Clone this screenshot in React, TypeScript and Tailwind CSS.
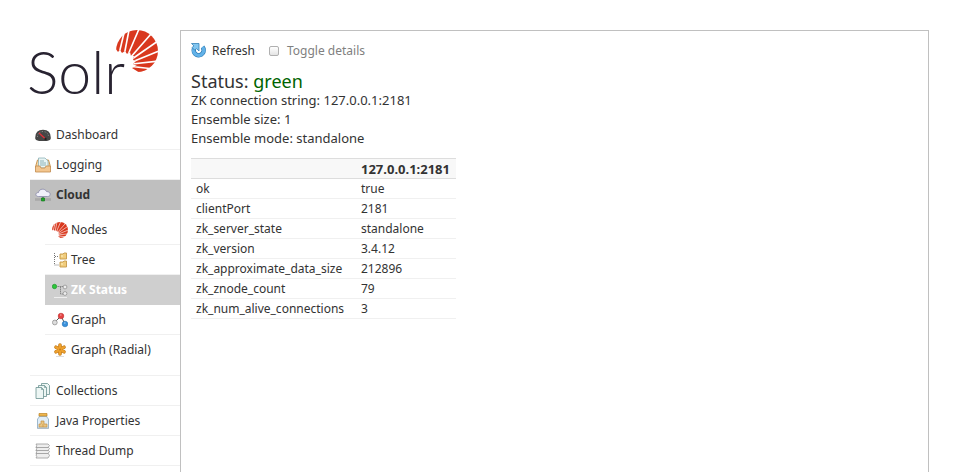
import React, { useId, useState } from "react";

function Burst({ className }: { className?: string }) {
  const id = useId();
  return (
    <svg viewBox="0 0 42 42" className={className} aria-hidden="true">
      <clipPath id={id}>
        <path d="M-1 18 2 22 4 20 6 23 9 21 11 24 14 22 15 26 18 26 17 30 20 31 17 34 21 36 16 38 24 43 43 43 43-1-1-1Z" />
      </clipPath>
      <g clipPath={`url(#${id})`}>
        <circle cx="21" cy="21" r="21" fill="#d9381e" />
        <g stroke="#fff" strokeWidth="1.600">
          <path d="M3 24 8 3" />
          <path d="M8 26 13 0" />
          <path d="M11 27 23-1" />
          <path d="M14 28 35 4" />
          <path d="M16 29 42 11" />
          <path d="M16 32 43 21" />
          <path d="M16 34 43 31" />
          <path d="M16 36.500 38 39" />
        </g>
      </g>
    </svg>
  );
}

function DashboardIcon() {
  return (
    <svg viewBox="0 0 16 16" className="size-4">
      <path d="M.3 12Q-.5 3 8 2.800 16.500 3 15.700 12 14 14.500 8 14 2 14.500.3 12Z" fill="#454545" />
      <path d="M2.500 10Q2.500 5 8 4.500 13.500 5 13.500 10" fill="none" stroke="#999" strokeDasharray="1 1.500" />
      <path d="m4 6 6.500 6" stroke="#e03038" strokeWidth="1.300" />
      <circle cx="10.500" cy="12" r="1.200" fill="#222" />
    </svg>
  );
}

function LoggingIcon() {
  return (
    <svg viewBox="0 0 16 16" className="size-4">
      <path d="M1 8 2.500 3h11L15 8v3H1Z" fill="#f6d8a8" stroke="#c99552" />
      <path d="M3.500 1H10l3 3v7h-9.500Z" fill="#e9f5f5" stroke="#8eb3b8" strokeWidth=".8" />
      <path d="M5 4h4M5 6h6M5 8h6" stroke="#8eb3b8" />
      <path d="M.5 9H5l1 2h4l1-2h4.500v6H.5Z" fill="#f3c68f" stroke="#c08a4c" strokeWidth=".8" />
    </svg>
  );
}

function CloudIcon() {
  return (
    <svg viewBox="0 0 16 16" className="size-4">
      <path d="M3.500 9.500C0 9.500 0 5.500 3.500 5.500 4 1.500 10 1 11.500 4.500c4.500 0 5 5 1 5Z" fill="#f1f1fa" stroke="#8989aa" strokeWidth=".8" />
      <path d="M0 12.500h16M8 10v3" stroke="#777" strokeWidth="1.500" />
      <path d="M0 12.500h16" stroke="#ddd" strokeWidth=".5" />
      <path d="M6.500 11h3v3h-3Z" fill="#20a52b" stroke="#087512" strokeWidth=".6" />
    </svg>
  );
}

function TreeIcon() {
  return (
    <svg viewBox="0 0 16 16" className="size-4">
      <path d="M2.500 1v12H7M3 4.500h4" fill="none" stroke="#777" strokeDasharray="1 1" />
      <path d="M8 2h3l1-1h2.500v6H8ZM8 10h3l1-1h2.500v6H8Z" fill="#f0cc7c" stroke="#c4984a" strokeWidth=".9" />
      <path d="M9 4h2M9 12h2" stroke="#fff4c4" />
    </svg>
  );
}

function StatusIcon() {
  return (
    <svg viewBox="0 0 16 16" className="size-4">
      <path d="M2 15.500h13" stroke="#eee" />
      <path d="M5.500 4.500H12M8.500 5v7H12" fill="none" stroke="#888" strokeDasharray="1.500 .5" />
      <circle cx="2.500" cy="4.500" r="2.200" fill="#2dc83b" stroke="#128b20" strokeWidth=".6" />
      <circle cx="13" cy="5" r="1.900" fill="#eee" stroke="#888" strokeWidth=".7" />
      <circle cx="13" cy="11.500" r="1.900" fill="#eee" stroke="#888" strokeWidth=".7" />
    </svg>
  );
}

function GraphIcon() {
  return (
    <svg viewBox="0 0 16 16" className="size-4">
      <path d="m3 10 6-6 4 8" fill="none" stroke="#555" />
      <circle cx="2.800" cy="10.500" r="2.400" fill="#ddd" stroke="#888" strokeWidth=".7" />
      <circle cx="9" cy="4" r="2.800" fill="#e54343" stroke="#b52020" strokeWidth=".5" />
      <circle cx="13" cy="12" r="2.800" fill="#3991dc" stroke="#1767aa" strokeWidth=".5" />
      <path d="M8 3h1.500M12 11h1.500" stroke="#fff" opacity=".6" />
    </svg>
  );
}

function RadialIcon() {
  return (
    <svg viewBox="0 0 16 16" className="size-4">
      <path d="M4 14.500h8" stroke="#ddd" />
      <path d="M8 3v9M4 5.200l8 4.600M12 5.200 4 9.800" stroke="#c47d1c" strokeWidth="3.600" strokeLinecap="round" />
      <path d="M8 3v9M4 5.200l8 4.600M12 5.200 4 9.800" stroke="#efa12d" strokeWidth="2.200" strokeLinecap="round" />
      <circle cx="8" cy="7.500" r="1" fill="#c47d1c" />
    </svg>
  );
}

function CollectionsIcon() {
  return (
    <svg viewBox="0 0 16 16" className="size-4">
      <g fill="#edf6f4" stroke="#6b9290" strokeWidth=".8">
        <path d="M6.500.5h6l2 2v9h-8Z" />
        <path d="M3.500 2.500h6l2 2v9h-8Z" />
        <path d="M1 4.500h5.500l2 2v9H1Z" />
      </g>
      <path d="M6.500 4.500v2h2M9.500 2.500v2h2" fill="none" stroke="#6b9290" strokeWidth=".7" />
    </svg>
  );
}

function JarIcon() {
  return (
    <svg viewBox="0 0 16 16" className="size-4">
      <path d="M2 15.500h12" stroke="#ccc" />
      <path d="M4 3.500h8q0 1.500 1.500 2.500v9h-11V6Q4 5 4 3.500Z" fill="#e0edf7" stroke="#89a9c1" strokeWidth=".8" />
      <path d="M4 .5h8v2.500H4Z" fill="#eeb64d" stroke="#bc8425" strokeWidth=".7" />
      <path d="M6 8h3v3h3v3H4v-3h2Z" fill="#e9c582" stroke="#c49345" strokeWidth=".7" />
      <path d="M8 11v3" stroke="#c49345" strokeWidth=".7" />
    </svg>
  );
}

function ThreadIcon() {
  return (
    <svg viewBox="0 0 16 16" className="size-4">
      <g fill="#eee" stroke="#999" strokeWidth=".8">
        <path d="M1 12q1.500-1 0-2h12l1.500 2.500-1.500 2.500H1q1.500-1.500 0-3Z" />
        <path d="M1 7q1.500 1.500 0 3.500h12l1.500-2L13 7Z" />
        <path d="M1 4q1.500 1.500 0 3.500h12l1.500-2L13 4Z" />
        <path d="M1 1q1.500 1.500 0 3.500h12l1.500-2L13 1Z" />
      </g>
    </svg>
  );
}

function RefreshIcon() {
  return (
    <svg viewBox="0 0 16 16" className="size-4">
      <path d="M3 5.500A5 5 0 1 0 11.500 4" fill="none" stroke="#2874ae" strokeWidth="4.400" />
      <path d="M3 5.500A5 5 0 1 0 11.500 4" fill="none" stroke="#62b2e8" strokeWidth="3.200" />
      <path d="M.5.500H8V8L5.700 5.700 3.500 7 1 4.500 3 3Z" fill="#82c6f0" stroke="#3683b9" strokeWidth=".8" />
    </svg>
  );
}

function MenuItem({ icon, label }: { icon: React.ReactNode; label: string }) {
  return (
    <li className="border-b border-[#f0f0f0]">
      <a href="#" className="flex h-[29px] items-center gap-[5px] pl-[5px] whitespace-nowrap">{icon}{label}</a>
    </li>
  );
}

function SubItem({ icon, label }: { icon: React.ReactNode; label: string }) {
  return (
    <li className="h-[30px] border-b border-[#f0f0f0] last:border-b-0">
      <a href="#" className="flex h-full items-center gap-[3px] pl-[7px] whitespace-nowrap">{icon}{label}</a>
    </li>
  );
}

const rows = [
  ["ok", "true"],
  ["clientPort", "2181"],
  ["zk_server_state", "standalone"],
  ["zk_version", "3.4.12"],
  ["zk_approximate_data_size", "212896"],
  ["zk_znode_count", "79"],
  ["zk_num_alive_connections", "3"],
];

export default function App() {
  const [details, setDetails] = useState(false);
  return (
    <div className="flex min-h-screen bg-white px-[30px] pt-[30px] font-['Noto_Sans','Open_Sans',sans-serif] text-[12px] leading-[18px] text-[#333]">
      <aside className="w-[150px] shrink-0">
        <a href="#" aria-label="Solr" className="relative block h-[90px] text-[#282331]">
          <span className="-ml-[3px] block pt-3 font-['Lato',sans-serif] text-[59px] leading-[60px] font-light">Solr</span>
          <Burst className="absolute top-0 left-[86px] size-[42px]" />
        </a>
        <nav>
          <ul>
            <MenuItem icon={<DashboardIcon />} label="Dashboard" />
            <MenuItem icon={<LoggingIcon />} label="Logging" />
            <li>
              <a href="#" className="flex h-[30px] items-center gap-[5px] bg-[#bfbfbf] pl-[5px] font-bold">
                <CloudIcon />Cloud
              </a>
              <ul className="border-b border-[#f0f0f0] pt-[5px] pb-[10px] pl-[15px]">
                <SubItem icon={<Burst className="size-4" />} label="Nodes" />
                <SubItem icon={<TreeIcon />} label="Tree" />
                <li>
                  <a href="#" className="flex h-[30px] items-center gap-[3px] bg-[#cfcfcf] pl-[7px] font-bold text-white"><StatusIcon />ZK Status</a>
                </li>
                <SubItem icon={<GraphIcon />} label="Graph" />
                <SubItem icon={<RadialIcon />} label="Graph (Radial)" />
              </ul>
            </li>
            <MenuItem icon={<CollectionsIcon />} label="Collections" />
            <MenuItem icon={<JarIcon />} label="Java Properties" />
            <MenuItem icon={<ThreadIcon />} label="Thread Dump" />
          </ul>
        </nav>
      </aside>
      <main className="min-w-0 flex-1 border border-b-0 border-[#c0c0c0] px-[10px] pt-[10px]">
        <div className="flex h-5 items-center gap-[14px]">
          <button type="button" className="flex items-center gap-[5px]"><RefreshIcon />Refresh</button>
          <label className="flex items-center gap-2 text-[#808080]">
            <input
              type="checkbox"
              checked={details}
              onChange={(e) => setDetails(e.target.checked)}
              className="size-[10px] appearance-none rounded-[2px] border border-[#b0b0b0] bg-linear-to-b from-white to-[#e4e4e4] checked:bg-[#62b2e8]"
            />
            Toggle details
          </label>
        </div>
        <h2 className="mt-[10px] text-[18px] leading-5">Status: <span className="text-[#006400]">green</span></h2>
        <div className="text-[13px] leading-[19px]">
          <p>ZK connection string: 127.0.0.1:2181</p>
          <p>Ensemble size: 1</p>
          <p>Ensemble mode: standalone</p>
        </div>
        <table className="mt-[10px] w-[265px] border-collapse text-left">
          <thead>
            <tr className="h-5 border-y border-[#ddd] bg-[#f8f8f8]">
              <td className="w-[165px] px-[5px]"></td>
              <th scope="col" className="px-[5px] text-[13px]">127.0.0.1:2181</th>
            </tr>
          </thead>
          <tbody>
            {rows.map(([name, value]) => (
              <tr key={name} className="h-5 border-b border-[#f0f0f0]">
                <td className="px-[5px]">{name}</td>
                <td className="px-[5px]">{value}</td>
              </tr>
            ))}
          </tbody>
        </table>
      </main>
    </div>
  );
}
